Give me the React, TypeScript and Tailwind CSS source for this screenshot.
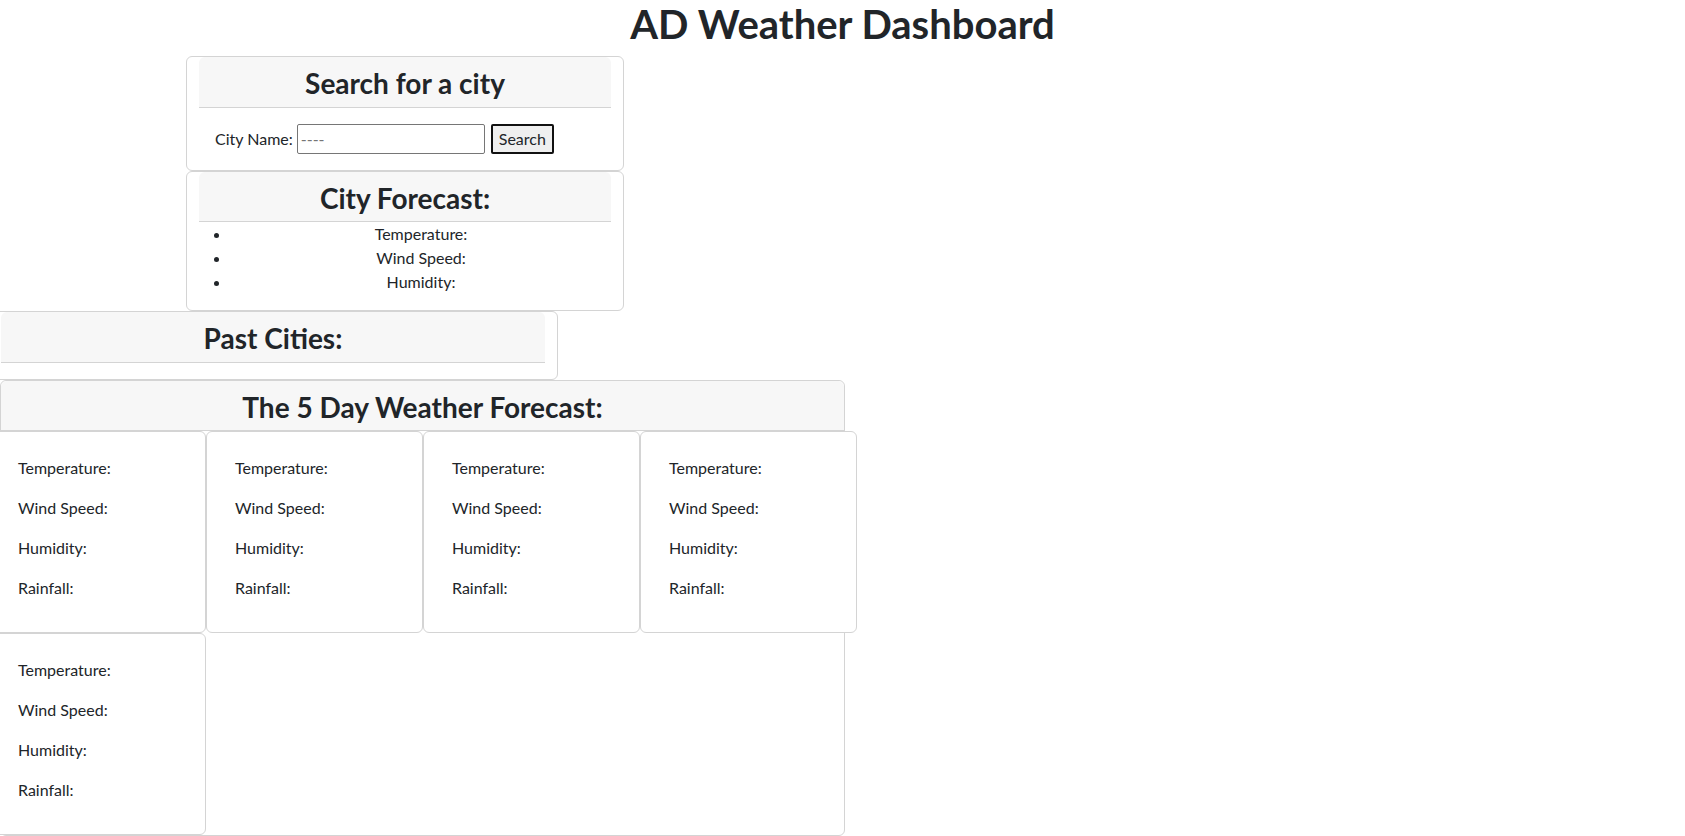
import React from "react";

function DayCard() {
  return (
    <div className="border border-[#d4d4d4] rounded-[6px] bg-white h-[202px]">
      <div className="p-4">
        <h5 className="mb-2 h-0"></h5>
        <p className="mb-4 pl-[12px]">Temperature:</p>
        <p className="mb-4 pl-[12px]">Wind Speed:</p>
        <p className="mb-4 pl-[12px]">Humidity:</p>
        <p className="mb-4 pl-[12px]">Rainfall:</p>
      </div>
    </div>
  );
}

function Header({ title, inset = true }: { title: string; inset?: boolean }) {
  return (
    <div
      className={
        inset
          ? "mx-3 bg-[#f7f7f7] border-b border-[#d4d4d4] pt-[10px] pb-[6px] px-4 text-center rounded-t-[6px]"
          : "bg-[#f7f7f7] border-b border-[#d4d4d4] pt-[10px] pb-[6px] px-4 text-center rounded-t-[6px]"
      }
    >
      <h3 className="text-[28px] leading-[1.2] font-bold">{title}</h3>
    </div>
  );
}

export default function App() {
  return (
    <div className="font-['Lato',sans-serif] text-[#212529] text-[16px] leading-[1.5] bg-white min-h-[836px] overflow-hidden">
      <h1 className="text-center text-[40px] leading-[1.2] font-bold mb-2 h-[48px]">
        AD Weather Dashboard
      </h1>

      <div className="ml-[186px] w-[438px] border border-[#d4d4d4] rounded-[6px] mt-[1px]">
        <Header title="Search for a city" />
        <div className="px-3">
          <div className="p-4 flex items-center">
            <label className="mr-[4px]">City Name:</label>
            <input
              className="w-[188px] h-[30px] border border-[#767676] rounded-[2px] px-[3px] placeholder:text-[#757575]"
              placeholder="----"
            />
            <button className="ml-[6px] h-[30px] px-[6px] border-2 border-[#111] bg-[#efefef] rounded-[2px] leading-[1]">
              Search
            </button>
          </div>
        </div>
      </div>

      <div className="ml-[186px] w-[438px] border border-[#d4d4d4] rounded-[6px]">
        <Header title="City Forecast:" />
        <ul className="mx-3 pl-8 list-disc text-center mb-4">
          <li>Temperature:</li>
          <li>Wind Speed:</li>
          <li>Humidity:</li>
        </ul>
      </div>

      <div className="ml-[-12px] w-[570px] border border-[#d4d4d4] rounded-[6px]">
        <Header title="Past Cities:" />
        <div className="h-4"></div>
      </div>

      <div className="w-[845px] border border-[#d4d4d4] rounded-[6px]">
        <Header title="The 5 Day Weather Forecast:" inset={false} />
        <div className="ml-[-12px] w-[868px] grid grid-cols-4">
          <DayCard />
          <DayCard />
          <DayCard />
          <DayCard />
          <DayCard />
        </div>
      </div>
    </div>
  );
}
